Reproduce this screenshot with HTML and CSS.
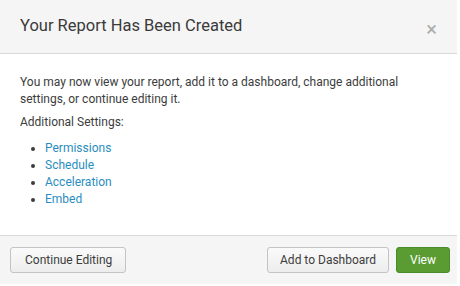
FILE: index.html
```html
<!DOCTYPE html>
<html lang="en">
<head>
  <meta charset="UTF-8">
  <title>Report Created</title>
  <link rel="stylesheet" href="styles.css">
</head>
<body>
  <div class="modal">
    <div class="modal-header">
      <h3>Your Report Has Been Created</h3>
      <span class="close">&times;</span>
    </div>
    <div class="modal-body">
      <p>You may now view your report, add it to a dashboard, change additional settings, or continue editing it.</p>
      <p class="sub">Additional Settings:</p>
      <ul>
        <li><a href="#">Permissions</a></li>
        <li><a href="#">Schedule</a></li>
        <li><a href="#">Acceleration</a></li>
        <li><a href="#">Embed</a></li>
      </ul>
    </div>
    <div class="modal-footer">
      <button class="btn btn-wide">Continue Editing</button>
      <div class="right">
        <button class="btn">Add to Dashboard</button>
        <button class="btn btn-primary">View</button>
      </div>
    </div>
  </div>
</body>
</html>
```
FILE: styles.css
```css
body {
  margin: 0;
  background: #fff;
  font-family: Roboto, "Liberation Sans", Arial, sans-serif;
  color: #3c3c3c;
}
.modal {
  width: 457px;
  height: 284px;
  display: flex;
  flex-direction: column;
  background: #fff;
}
.modal-header {
  height: 53px;
  background: #f5f5f5;
  border-bottom: 1px solid #d9d9d9;
  display: flex;
  align-items: center;
  justify-content: space-between;
  padding: 0 20px 0 20px;
}
.modal-header h3 {
  margin: 0 0 3px;
  font-size: 16.5px;
  font-weight: normal;
  color: #3a3a3a;
}
.close {
  font-size: 20px;
  color: #aaa;
  margin-top: 5px;
}
.modal-body {
  flex: 1;
  padding: 20px 20px 0;
  font-size: 12px;
  line-height: 17px;
}
.modal-body p {
  margin: 0 0 6px;
}
.modal-body .sub {
  margin-bottom: 9px;
}
ul {
  margin: 0;
  padding-left: 25px;
}
a {
  color: #2a8dc0;
  text-decoration: none;
}
.modal-footer {
  height: 48px;
  background: #f5f5f5;
  border-top: 1px solid #d9d9d9;
  display: flex;
  align-items: center;
  justify-content: space-between;
  padding: 0 7px 0 10px;
}
.right {
  display: flex;
  gap: 7px;
}
.btn {
  font-family: inherit;
  font-size: 12px;
  height: 26px;
  padding: 0 12px;
  border: 1px solid #c3c3c3;
  border-radius: 3px;
  background: linear-gradient(#fafafa, #ededed);
  color: #3c3c3c;
}
.btn-wide {
  padding: 0 13px 0 14px;
}
.btn-primary {
  background: #5a9c32;
  border-color: #4d8a29;
  color: #fff;
  padding: 0 13px;
}
```
